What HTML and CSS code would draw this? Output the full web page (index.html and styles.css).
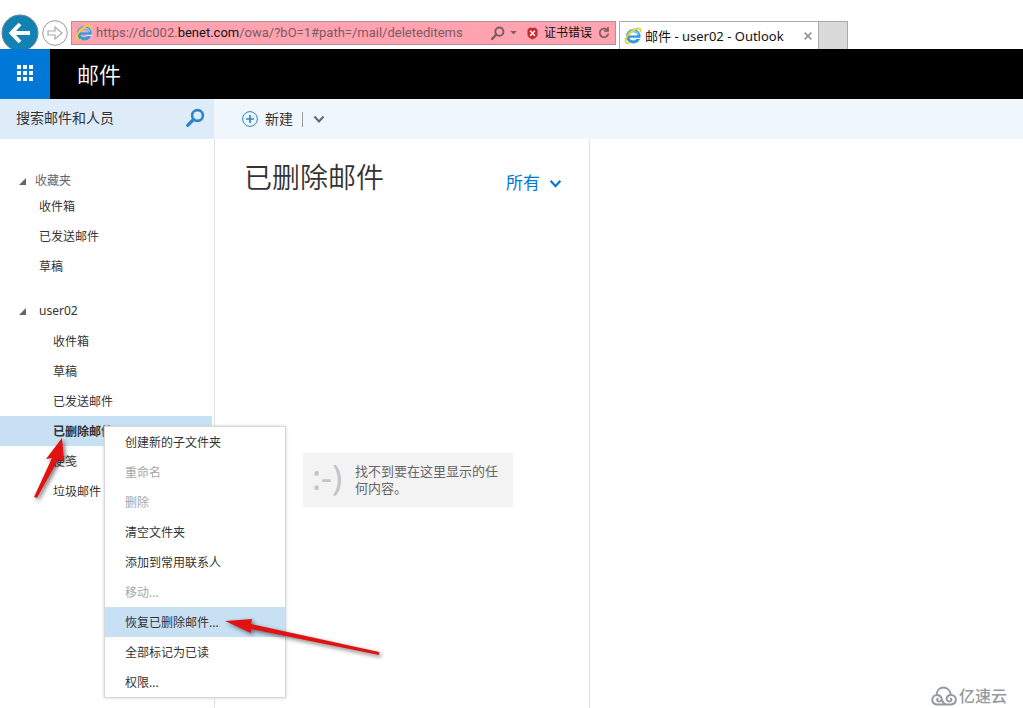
FILE: index.html
```html
<!DOCTYPE html>
<html lang="zh-CN">
<head>
<meta charset="utf-8">
<meta name="viewport" content="width=device-width, initial-scale=1">
<title>邮件 - user02 - Outlook</title>
<link rel="stylesheet" href="styles.css">
</head>
<body>
<svg class="defs" aria-hidden="true">
  <defs>
    <symbol id="ie" viewBox="0 0 18 18">
      <circle cx="9.300" cy="9.300" r="5.700" fill="none" stroke="#2f9be0" stroke-width="3.200"/>
      <path d="M5 9.600H16" stroke="#2f9be0" stroke-width="2.400"/>
      <path d="M11.500 12H17.500V10.800H11.500Z" fill="#ffe9ec"/>
      <path d="M4 8A5.600 5.600 0 0 1 14.600 8" fill="none" stroke="#8dd5f7" stroke-width="1.200"/>
      <path d="M2.300 16C-.5 13 5 4.500 11.500 2C15.800.6 17.300 2 16 5" fill="none" stroke="#ecd03a" stroke-width="1.900"/>
      <path d="M2.300 16C3.300 16.800 5 16.200 6.500 15.200" fill="none" stroke="#ecc531" stroke-width="1.500"/>
    </symbol>
    <symbol id="lens" viewBox="0 0 20 20">
      <circle cx="12.500" cy="7.500" r="5.400" fill="none" stroke="currentColor" stroke-width="2.600"/>
      <path d="M8.500 11.500L2.700 17.300" fill="none" stroke="currentColor" stroke-width="3.200" stroke-linecap="round"/>
    </symbol>
    <symbol id="chevron" viewBox="0 0 12 10">
      <path d="M1.500 2.500L6 7.500L10.500 2.500" fill="none" stroke="currentColor" stroke-width="2"/>
    </symbol>
  </defs>
</svg>

<div class="browser">
  <button class="nav-back" aria-label="后退">
    <svg viewBox="0 0 38 38"><circle cx="19" cy="19" r="18" fill="#1481b5" stroke="#6b8795"/><path d="M29 19H11M19 10L10.500 19L19 28" fill="none" stroke="#fff" stroke-width="4"/></svg>
  </button>
  <button class="nav-forward" aria-label="前进">
    <svg viewBox="0 0 26 26"><circle cx="13" cy="13" r="12.300" fill="#fff" stroke="#999"/><path d="M6 11H13V7L20 13L13 19V15H6Z" fill="#fff" stroke="#aaa" stroke-width="1.200"/></svg>
  </button>
  <div class="address">
    <svg class="ie-icon"><use href="#ie"/></svg>
    <div class="url" role="textbox" aria-label="地址" contenteditable="true" spellcheck="false">https://dc002.<span class="domain">benet.com</span>/owa/?bO=1#path=/mail/deleteditems</div>
    <button class="tool lens-tool" aria-label="搜索"><svg viewBox="0 0 20 20"><use href="#lens"/></svg></button>
    <button class="tool drop-tool" aria-label="显示地址列表"><svg viewBox="0 0 8 5"><path d="M0 0H8L4 4.500Z" fill="currentColor"/></svg></button>
    <button class="cert">
      <svg viewBox="0 0 12 14"><path d="M3 .5L6 1L9 .5L11.500 3V9C11 11 8.500 12.500 6 13.500C3.500 12.500 1 11 .5 9V3Z" fill="#c92a32"/><path d="M3.500 4L8.500 9.500M8.500 4L3.500 9.500" stroke="#fff" stroke-width="1.700"/></svg>
      证书错误
    </button>
    <button class="tool refresh-tool" aria-label="刷新"><svg viewBox="0 0 12 14"><path d="M9 3.800A4.300 4.300 0 1 0 10.300 7.500M10 1V5H6" fill="none" stroke="currentColor" stroke-width="1.700"/></svg></button>
  </div>
  <div class="tab">
    <svg class="ie-icon"><use href="#ie"/></svg>
    <span class="tab-title">邮件 - user02 - Outlook</span>
    <button class="tab-close" aria-label="关闭选项卡"><svg viewBox="0 0 8 8"><path d="M.7.700L7.300 7.300M7.300.700L.7 7.300" stroke="#999" stroke-width="1.800"/></svg></button>
  </div>
  <button class="new-tab" aria-label="新建选项卡"></button>
</div>

<header class="suite">
  <button class="launcher" aria-label="应用启动器">
    <svg viewBox="0 0 16 16" fill="#fff"><path d="M0 0h4v4H0zM6 0h4v4H6zM12 0h4v4h-4zM0 6h4v4H0zM6 6h4v4H6zM12 6h4v4h-4zM0 12h4v4H0zM6 12h4v4H6zM12 12h4v4h-4z"/></svg>
  </button>
  <h1 class="app-name">邮件</h1>
</header>

<div class="commands">
  <form class="search">
    <input class="search-box" type="text" aria-label="搜索邮件和人员" placeholder="搜索邮件和人员">
    <button class="search-go" type="button" aria-label="搜索"><svg viewBox="0 0 20 20"><use href="#lens"/></svg></button>
  </form>
  <button class="new-mail">
    <svg viewBox="0 0 16 16"><circle cx="8" cy="8" r="7.400" fill="none" stroke="#2b83cf"/><path d="M8 4V12M4 8H12" stroke="#2b83cf" stroke-width="1.700"/></svg>
    新建
  </button>
  <span class="divider"></span>
  <button class="new-more" aria-label="更多新建选项"><svg viewBox="0 0 12 10"><use href="#chevron"/></svg></button>
</div>

<main class="workspace">
  <nav class="folders" aria-label="文件夹">
    <button class="group favorites"><svg viewBox="0 0 7 7"><path d="M7 0V7H0Z"/></svg>收藏夹</button>
    <a class="folder" href="#">收件箱</a>
    <a class="folder" href="#">已发送邮件</a>
    <a class="folder" href="#">草稿</a>
    <button class="group account"><svg viewBox="0 0 7 7"><path d="M7 0V7H0Z"/></svg>user02</button>
    <a class="folder nested" href="#">收件箱</a>
    <a class="folder nested" href="#">草稿</a>
    <a class="folder nested" href="#">已发送邮件</a>
    <a class="folder nested selected" href="#">已删除邮件</a>
    <a class="folder nested" href="#">便笺</a>
    <a class="folder nested" href="#">垃圾邮件</a>
  </nav>
  <section class="messages">
    <div class="list-head">
      <h2 class="list-title">已删除邮件</h2>
      <button class="filter">所有<svg viewBox="0 0 12 10"><use href="#chevron"/></svg></button>
    </div>
    <div class="empty">
      <span class="smiley">:-)</span>
      <p class="empty-text">找不到要在这里显示的任何内容。</p>
    </div>
  </section>
  <section class="reading" aria-label="阅读窗格"></section>
</main>

<div class="menu" role="menu">
  <button class="item" role="menuitem">创建新的子文件夹</button>
  <button class="item" role="menuitem" disabled>重命名</button>
  <button class="item" role="menuitem" disabled>删除</button>
  <button class="item" role="menuitem">清空文件夹</button>
  <button class="item" role="menuitem">添加到常用联系人</button>
  <button class="item" role="menuitem" disabled>移动...</button>
  <button class="item active" role="menuitem">恢复已删除邮件...</button>
  <button class="item" role="menuitem">全部标记为已读</button>
  <button class="item" role="menuitem">权限...</button>
</div>

<svg class="arrow arrow-folder" viewBox="0 0 40 70" aria-hidden="true"><path d="M32 3L34 26L28 25L7 63L4 62L22 23L16 24Z"/></svg>
<svg class="arrow arrow-item" viewBox="0 0 164 44" aria-hidden="true"><path d="M4 6L31 4L30 9L158 37L158 40L30 14L30 18Z"/></svg>

<div class="watermark">
  <svg viewBox="0 0 26 20" fill="none" stroke="#939aa0" stroke-width="2"><path d="M6 18.500H20C26.500 18 26.500 9 20 9C15 9 14 15.500 18.500 15.500C21 15.500 21 12.500 19 12.500M6 18.500C-.5 18 0 9 6 9C11 9 12.500 15.500 8 15.500C5.500 15.500 5.500 12.500 7.500 12.500M5.500 9C6 -1 18.500 -1 20 9M11 14C12 17 13 18 15 18.500"/></svg>
  亿速云
</div>
</body>
</html>
```
FILE: styles.css
```css
* { box-sizing: border-box; }

body {
  margin: 0;
  min-height: 100vh;
  display: flex;
  flex-direction: column;
  position: relative;
  overflow: hidden;
  background: #fff;
  color: #333;
  font: 12px/18px "Noto Sans", "Noto Sans CJK SC", sans-serif;
}

button {
  margin: 0;
  padding: 0;
  border: 0;
  background: none;
  color: inherit;
  font: inherit;
  cursor: pointer;
}

svg { display: block; flex: none; }

.defs { position: absolute; width: 0; height: 0; }

/* Browser chrome */
.browser {
  display: flex;
  align-items: flex-start;
  height: 49px;
  padding: 14px 0 0 1px;
  overflow: hidden;
}

.nav-back svg { width: 38px; height: 38px; }
.nav-forward { margin: 6px 3px 0; }
.nav-forward svg { width: 26px; height: 26px; }

.address {
  display: flex;
  align-items: center;
  flex: 0 1 545px;
  height: 24px;
  margin-top: 7px;
  padding: 0 5px 0 3px;
  border: 1px solid #b39097;
  background: #ffa3b1;
  color: #7e5960;
}

.ie-icon { width: 18px; height: 18px; }

.url {
  flex: 1;
  margin-left: 3px;
  overflow: hidden;
  white-space: nowrap;
  font-family: Roboto, "Noto Sans CJK SC", sans-serif;
  font-size: 13px;
  outline: 0;
}

.domain { color: #111; }
.lens-tool svg { width: 15px; height: 15px; }
.drop-tool { margin: 0 10px 0 5px; }
.drop-tool svg { width: 7px; height: 4px; }

.cert {
  display: flex;
  align-items: center;
  gap: 6px;
  color: #111;
}

.cert svg { width: 11px; height: 13px; }
.refresh-tool { margin-left: 6px; }
.refresh-tool svg { width: 12px; height: 14px; }

.tab {
  display: flex;
  align-items: center;
  width: 200px;
  height: 28px;
  margin: 7px 0 0 3px;
  padding: 0 6px 0 4px;
  border: 1px solid #aaa;
  border-bottom: 0;
  color: #111;
}

.tab-title { flex: 1; margin-left: 3px; white-space: nowrap; font-size: 13px; }
.tab-close svg { width: 8px; height: 8px; }

.new-tab {
  width: 29px;
  height: 28px;
  margin-top: 7px;
  border: 1px solid #aaa;
  border-width: 1px 1px 0 0;
  background: #dadada;
}

/* Suite header */
.suite {
  display: flex;
  height: 50px;
  background: #000;
  color: #fff;
}

.launcher {
  display: grid;
  place-items: center;
  width: 50px;
  padding-bottom: 2px;
  background: #0078d7;
}

.launcher svg { width: 16px; height: 16px; }

.app-name {
  margin: 0 0 0 27px;
  font-size: 22px;
  font-weight: 350;
  line-height: 50px;
}

/* Command bar */
.commands {
  display: flex;
  align-items: center;
  height: 40px;
  background: #eff6fc;
}

.search {
  display: flex;
  align-items: center;
  width: 214px;
  height: 40px;
  padding: 0 9px 2px 16px;
  background: #deecf9;
}

.search-box {
  flex: 1;
  min-width: 0;
  padding: 0;
  border: 0;
  outline: 0;
  background: none;
  color: #333;
  font: inherit;
  font-size: 14px;
}

.search-box::placeholder { color: #333; opacity: 1; }
.search-go { color: #2b83cf; }
.search-go svg { width: 20px; height: 20px; }

.new-mail {
  display: flex;
  align-items: center;
  gap: 7px;
  margin-left: 28px;
  font-size: 14px;
}

.new-mail svg { width: 16px; height: 16px; }

.divider {
  width: 1px;
  height: 15px;
  margin: 0 10px 0 9px;
  background: #999;
}

.new-more { color: #666; }
.new-more svg { width: 12px; height: 10px; }

/* Panes */
.workspace {
  flex: 1;
  display: grid;
  grid-template-columns: 215px 375px 1fr;
}

.folders {
  display: flex;
  flex-direction: column;
  padding: 32px 2px 0 0;
  border-right: 1px solid #dfdfdf;
}

.group {
  display: flex;
  align-items: center;
  padding-left: 19px;
  text-align: left;
}

.group svg { width: 7px; height: 7px; fill: #666; }
.favorites { height: 20px; gap: 9px; color: #666; }
.account { height: 30px; margin-top: 15px; gap: 13px; }

.folder {
  height: 30px;
  padding-left: 39px;
  color: #333;
  line-height: 32px;
  text-decoration: none;
}

.nested { padding-left: 53px; }
.selected { background: #c7e0f4; font-weight: 700; }

.messages { border-right: 1px solid #e1e1e1; }

.list-head {
  display: flex;
  justify-content: space-between;
  padding: 18px 27px 0 29px;
}

.list-title {
  margin: 0;
  font-size: 28px;
  font-weight: 350;
  line-height: 40px;
}

.filter {
  display: flex;
  align-items: center;
  gap: 9px;
  margin-top: 10px;
  height: 32px;
  color: #0078d7;
  font-size: 17px;
}

.filter svg { width: 13px; height: 11px; }

.empty {
  display: flex;
  align-items: center;
  width: 210px;
  height: 54px;
  margin: 254px auto 0 88px;
  padding: 0 12px 0 9px;
  background: #f3f3f3;
}

.smiley {
  flex: none;
  width: 43px;
  padding-bottom: 6px;
  color: #c4c4c4;
  font-size: 34px;
  font-weight: 400;
  line-height: 40px;
}

.empty-text {
  margin: 0;
  color: #666;
  font-size: 13px;
  line-height: 17px;
}

/* Context menu over the folder pane */
.menu {
  position: absolute;
  left: 104px;
  top: 426px;
  display: flex;
  flex-direction: column;
  width: 182px;
  border: 1px solid #d8d8d8;
  background: #fff;
  box-shadow: 0 0 3px #ccc;
}

.item {
  height: 30px;
  padding: 2px 0 0 20px;
  text-align: left;
}

.item:disabled { color: #a6a6a6; }
.item.active { background: #c7e0f4; }

/* Annotations */
.arrow {
  position: absolute;
  fill: #e11212;
  filter: drop-shadow(2px 2px 2px #0008);
  pointer-events: none;
}

.arrow-folder { left: 30px; top: 435px; width: 40px; height: 70px; }
.arrow-item { left: 221px; top: 615px; width: 164px; height: 44px; }

.watermark {
  position: absolute;
  right: 16px;
  bottom: 2px;
  display: flex;
  align-items: center;
  gap: 2px;
  color: #939aa0;
  font-size: 16px;
  font-weight: 500;
  line-height: 20px;
}

.watermark svg { width: 26px; height: 20px; }
```
